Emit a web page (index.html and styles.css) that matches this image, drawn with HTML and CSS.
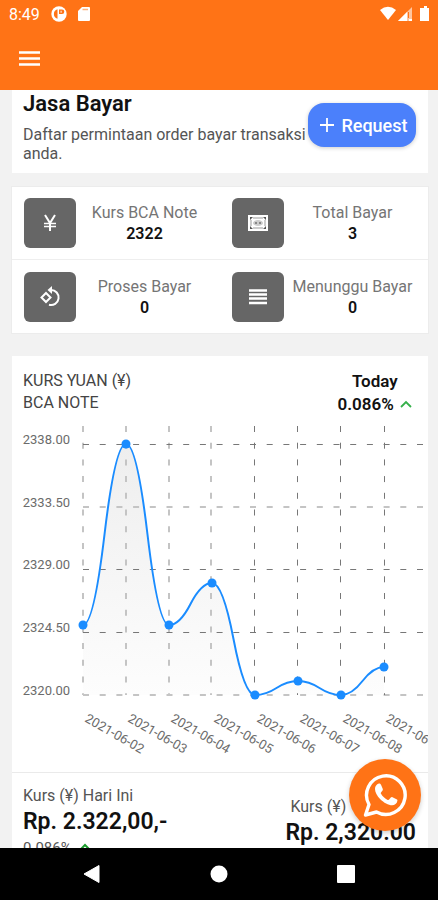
FILE: index.html
```html
<!DOCTYPE html>
<html lang="id">
<head>
<meta charset="utf-8">
<meta name="viewport" content="width=device-width, initial-scale=1">
<title>Jasa Bayar</title>
<link rel="stylesheet" href="styles.css">
</head>
<body>
<header class="top">
  <div class="status">
    <span class="clock">8:49</span>
    <svg class="status-icon" width="16" height="16" viewBox="0 0 16 16"><circle cx="8" cy="8" r="7.7" fill="#fff"/><path d="M6.500 3.200a5 5 0 0 0 0 9.600z" fill="#ff7316"/><path d="M8 3.500h3a2.300 2.300 0 0 1 0 4.600H8z" fill="#ff7316"/><path d="M9.300 4.800H11v2H9.300z" fill="#ffc59e"/></svg>
    <svg class="status-icon" width="12" height="14" viewBox="0 0 12 14"><path d="M4 0h7a1 1 0 0 1 1 1v12a1 1 0 0 1-1 1H1a1 1 0 0 1-1-1V4z" fill="#fff"/><path d="M4.500 2.500H10" stroke="#ffb07c" stroke-width="1.500"/></svg>
    <span class="spacer"></span>
    <svg width="50" height="16" viewBox="0 0 50 16"><path d="M0 4Q8-2.500 16 4L8 14z" fill="#fff"/><path d="M18 15 32 1v14z" fill="#ffc59e"/><path d="M18 15 27 6v9zM29 13h3v2h-3z" fill="#fff"/><path d="M28.500 6v6" stroke="#ff7316"/><path d="M42 2h2V0h3v2h2v13h-9V2z" fill="#fff"/></svg>
  </div>
  <button class="menu" aria-label="Menu"><svg width="21" height="15" viewBox="0 0 21 15"><path d="M0 1.500h21M0 7.500h21M0 13.500h21" stroke="#fff" stroke-width="2.400"/></svg></button>
</header>

<main class="page">
  <section class="card intro">
    <div class="intro-text">
      <h1>Jasa Bayar</h1>
      <p>Daftar permintaan order bayar transaksi anda.</p>
    </div>
    <button class="request"><svg width="14" height="14" viewBox="0 0 14 14"><path d="M7 0v14M0 7h14" stroke="#fff" stroke-width="1.800"/></svg>Request</button>
  </section>

  <section class="card stats">
    <div class="stat">
      <span class="tile"><svg width="20" height="20" viewBox="0 0 20 20" fill="none" stroke="#fff"><path d="m5 2 5 8 5-8M10 10v8" stroke-width="2"/><path d="M4 10.500h12M4 13.500h12" stroke-width="1.500"/></svg></span>
      <div class="stat-text"><span>Kurs BCA Note</span><strong>2322</strong></div>
    </div>
    <div class="stat">
      <span class="tile"><svg width="20" height="16" viewBox="0 0 20 16"><path d="M0 0h20v16H0z" fill="#fff"/><path d="M5 3h10M5 13h10M3 5v6M17 5v6" stroke="#999" stroke-width="1"/><path d="M2 2h3L2 5zM18 2h-3l3 3zM2 14h3l-3-3zM18 14h-3l3-3z" fill="#555"/><ellipse cx="10" cy="8" rx="5" ry="3" fill="#ccc"/><path d="M7 8h2M11 8h2" stroke="#888" stroke-width="2"/></svg></span>
      <div class="stat-text"><span>Total Bayar</span><strong>3</strong></div>
    </div>
    <div class="stat">
      <span class="tile"><svg width="22" height="22" viewBox="0 0 22 22" fill="none" stroke="#fff" stroke-width="2"><path d="m7 7 4.500 4.500L7 16l-4.500-4.500z"/><path d="M12 4a7.500 7.500 0 1 1-2 14.700"/><path d="M13 0v8L8.500 4z" fill="#fff" stroke="none"/></svg></span>
      <div class="stat-text"><span>Proses Bayar</span><strong>0</strong></div>
    </div>
    <div class="stat">
      <span class="tile"><svg width="18" height="16" viewBox="0 0 18 16"><path d="M0 1.500h18M0 5.500h18M0 9.500h18M0 14h18" stroke="#fff" stroke-width="2.400"/></svg></span>
      <div class="stat-text"><span>Menunggu Bayar</span><strong>0</strong></div>
    </div>
  </section>

  <section class="card rates">
    <div class="rates-head">
      <h2>KURS YUAN (¥)<br>BCA NOTE</h2>
      <div class="today">
        <strong>Today</strong>
        <strong>0.086% <svg width="12" height="8" viewBox="0 0 12 8"><path d="m1 7 5-5 5 5" fill="none" stroke="#35b04a" stroke-width="1.800"/></svg></strong>
      </div>
    </div>
    <svg class="chart" viewBox="0 0 416 352" role="img" aria-label="Kurs Yuan BCA Note">
      <defs><linearGradient id="fade" x1="0" y1="0" x2="0" y2="1"><stop offset="0" stop-color="#eee"/><stop offset="1" stop-color="#fdfdfd"/></linearGradient></defs>
      <path fill="url(#fade)" d="M71 205Q81.750 205 92.500 114.500T114 24Q124.750 24 135.500 114.500T157 205Q167.750 205 178.500 184T200 163Q210.750 163 221.500 219T243 275Q253.750 275 264.500 268T286 261Q296.750 261 307.500 268T329 275Q339.750 275 350.500 261T372 247V275H71z"/>
      <g class="grid">
        <path class="light" d="M71 6V275M114 6V275M157 6V275M199 6V275M71 87H411M71 275H411"/>
        <path d="M242.500 6V275M285.500 6V275M328.500 6V275M372.500 6V275M71 24.500H411M71 149.500H411M71 212.500H411"/>
      </g>
      <path fill="none" stroke="#1a8cff" stroke-width="2" d="M71 205Q81.750 205 92.500 114.500T114 24Q124.750 24 135.500 114.500T157 205Q167.750 205 178.500 184T200 163Q210.750 163 221.500 219T243 275Q253.750 275 264.500 268T286 261Q296.750 261 307.500 268T329 275Q339.750 275 350.500 261T372 247"/>
      <g fill="#1a8cff"><circle cx="71" cy="205" r="4.500"/><circle cx="114" cy="24" r="4.500"/><circle cx="157" cy="205" r="4.500"/><circle cx="200" cy="163" r="4.500"/><circle cx="243" cy="275" r="4.500"/><circle cx="286" cy="261" r="4.500"/><circle cx="329" cy="275" r="4.500"/><circle cx="372" cy="247" r="4.500"/></g>
      <g class="axis y"><text x="58" y="24">2338.00</text><text x="58" y="87">2333.50</text><text x="58" y="149">2329.00</text><text x="58" y="212">2324.50</text><text x="58" y="275">2320.00</text></g>
      <g class="axis">
        <text transform="translate(72 301) rotate(30)">2021-06-02</text>
        <text transform="translate(115 301) rotate(30)">2021-06-03</text>
        <text transform="translate(158 301) rotate(30)">2021-06-04</text>
        <text transform="translate(201 301) rotate(30)">2021-06-05</text>
        <text transform="translate(244 301) rotate(30)">2021-06-06</text>
        <text transform="translate(287 301) rotate(30)">2021-06-07</text>
        <text transform="translate(330 301) rotate(30)">2021-06-08</text>
        <text transform="translate(373 301) rotate(30)">2021-06-09</text>
      </g>
    </svg>
    <div class="summary">
      <div>
        <span>Kurs (¥) Hari Ini</span>
        <strong>Rp. 2.322,00,-</strong>
        <small>0.086% <svg width="12" height="8" viewBox="0 0 12 8"><path d="m1 7 5-5 5 5" fill="none" stroke="#1b9a2c" stroke-width="2"/></svg></small>
      </div>
      <div class="previous">
        <span>Kurs (¥)</span>
        <strong>Rp. 2,320.00</strong>
      </div>
    </div>
  </section>

  <button class="fab" aria-label="WhatsApp"><svg width="44" height="44" viewBox="0 0 44 44"><path d="M2.500 42 6 31.500A19.300 19.300 0 1 1 13.500 39z" fill="none" stroke="#fff" stroke-width="3.400" stroke-linejoin="round"/><path d="M14 11.500c1.400-1.500 3.300-1.300 4 .2l1.700 4c.5 1.200-.2 2-1.700 3.700-.4.500-.3.900 0 1.400 1.600 2.700 3.800 4.800 6.700 6.100.6.300 1 .2 1.400-.3l1.700-2c.5-.6 1-.7 1.700-.4l4 2c.8.400 1 .7.900 1.600-.4 3-2.800 4.400-5.300 4.500-3.600 0-8.400-2.600-11.800-6-3.300-3.300-5.300-6.900-5.300-10.200 0-1.800.7-3.400 2-4.600z" fill="#fff"/></svg></button>
</main>

<nav class="system" aria-label="Sistem">
  <button aria-label="Kembali"><svg width="18" height="20" viewBox="0 0 18 20"><path d="M1 10 16 1.500v17z" fill="#fff" stroke="#fff" stroke-linejoin="round"/></svg></button>
  <button aria-label="Beranda"><svg width="18" height="18" viewBox="0 0 18 18"><circle cx="9" cy="9" r="8.500" fill="#fff"/></svg></button>
  <button aria-label="Aplikasi"><svg width="18" height="18" viewBox="0 0 18 18"><rect width="18" height="18" rx="1" fill="#fff"/></svg></button>
</nav>
</body>
</html>
```
FILE: styles.css
```css
* { box-sizing: border-box; }

body {
  margin: 0;
  height: 100vh;
  display: flex;
  flex-direction: column;
  background: #f2f2f2;
  color: #111;
  font-family: Roboto, sans-serif;
  font-size: 16px;
}

button {
  border: 0;
  padding: 0;
  background: none;
  font: inherit;
  color: inherit;
}

svg { display: block; flex: none; }
h1, h2, p { margin: 0; }
strong, h1 { font-weight: 600; }

.top {
  flex: none;
  height: 90px;
  background: #ff7316;
  color: #fff;
}

.status {
  display: flex;
  align-items: center;
  height: 28px;
  padding: 0 8px 0 9px;
}

.clock { margin-right: 11px; }
.status-icon { margin-right: 11px; }
.spacer { flex: 1; }
.menu { display: block; padding: 23px 19px; }

.page {
  position: relative;
  flex: 1;
  min-height: 0;
  overflow: hidden;
  padding: 0 10px 0 12px;
}

.card { background: #fff; }

.intro {
  display: flex;
  align-items: flex-start;
  justify-content: space-between;
  padding: 0 12px 10px 11px;
}

.intro-text { flex: 1; }

.intro h1 {
  font-size: 22px;
  line-height: 28px;
  margin-bottom: 7px;
}

.intro p { line-height: 19px; color: #555; }

.request {
  display: flex;
  align-items: center;
  justify-content: center;
  gap: 7px;
  width: 108px;
  height: 44px;
  margin-top: 13px;
  padding-left: 4px;
  border-radius: 16px;
  background: #4b80fb;
  color: #fff;
  font-size: 18px;
  font-weight: 500;
  box-shadow: 0 1px 4px #0003;
}

.stats {
  display: grid;
  grid-template-columns: 1fr 1fr;
  margin-top: 14px;
  outline: 1px solid #ececec;
}

.stat {
  display: flex;
  align-items: center;
  height: 73px;
  padding: 0 7px 0 12px;
}

.stat:nth-child(-n+2) { border-bottom: 1px solid #eee; }

.tile {
  display: grid;
  place-items: center;
  width: 52px;
  height: 50px;
  border-radius: 6px;
  background: #666;
}

.stat-text {
  flex: 1;
  display: flex;
  flex-direction: column;
  align-items: center;
  line-height: 21px;
  color: #757575;
  white-space: nowrap;
}

.stat-text strong { color: #111; }

.rates { margin-top: 23px; }

.rates-head {
  display: flex;
  justify-content: space-between;
  height: 64px;
  padding: 14px 16px 0 11px;
}

.rates h2 {
  font-size: 16px;
  font-weight: 400;
  line-height: 22px;
  color: #444;
}

.today {
  display: flex;
  flex-direction: column;
  align-items: center;
  font-size: 17px;
  line-height: 23px;
}

.today svg, small svg { display: inline-block; margin-left: 2px; vertical-align: 2px; }

.chart { width: 100%; height: auto; }
.grid { fill: none; stroke: #777; stroke-width: 1; stroke-dasharray: 6 10.7; }
.grid .light { stroke: #c4c4c4; stroke-width: 2; }
.axis { font-size: 13px; fill: #6b6b6b; }
.y { text-anchor: end; }

.summary {
  display: flex;
  justify-content: space-between;
  padding: 12px 12px 12px 11px;
  border-top: 1px solid #eaeaea;
}

.summary div {
  display: flex;
  flex-direction: column;
  color: #555;
  line-height: 22px;
}

.summary strong {
  font-size: 23px;
  line-height: 30px;
  color: #111;
}

.summary small { font-size: 15px; line-height: 22px; }
.summary small svg { margin-left: 4px; }
.summary .previous { padding-top: 11px; }
.previous span { padding-left: 5px; }

.fab {
  position: absolute;
  right: 17px;
  bottom: 17px;
  display: grid;
  place-items: center;
  width: 72px;
  height: 72px;
  border-radius: 50%;
  background: #ff7316;
  box-shadow: 0 2px 5px #0003;
}

.system {
  flex: none;
  display: flex;
  justify-content: center;
  align-items: center;
  height: 52px;
  background: #000;
}

.system button {
  display: grid;
  place-items: center;
  width: 29%;
  height: 52px;
}
```
